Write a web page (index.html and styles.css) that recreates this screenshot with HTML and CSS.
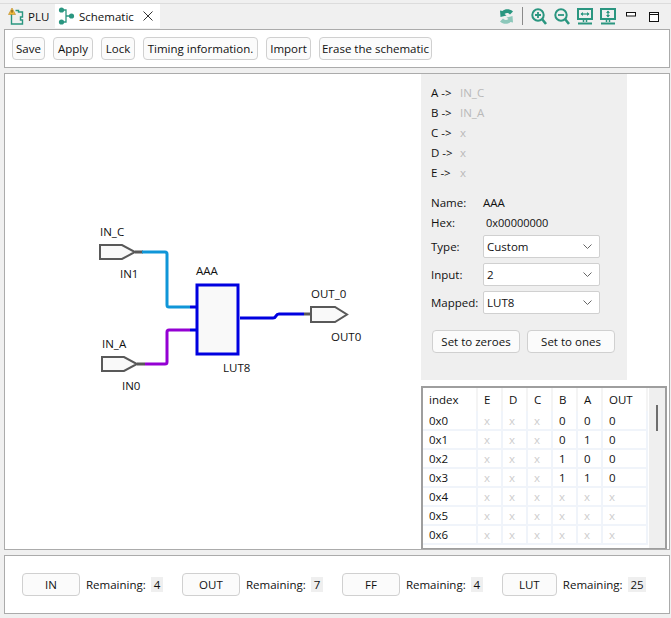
FILE: index.html
```html
<!DOCTYPE html>
<html lang="en">
<head>
    <meta charset="UTF-8">
    <title>Schematic</title>
    <link rel="stylesheet" href="styles.css">
</head>
<body>
    <div class="tabbar">
        <div class="tab">
            <svg class="tab-icon" width="16" height="18" viewBox="0 0 16 18">
                <path d="M3.500 7v10h11v-4h-2v-3h2V5h-4V3.500h-3" fill="none" stroke="#2a9680" stroke-width="1.400"/>
                <path d="M4 1 7.500 7.500H.5z" fill="#f0b93a" stroke="#b98a2a" stroke-width=".6"/>
                <rect x="3.500" y="3" width="1" height="2.600" fill="#5a4010"/>
            </svg>
            <span>PLU</span>
        </div>
        <div class="tab active">
            <svg class="tab-icon" width="17" height="18" viewBox="0 0 17 18">
                <path d="M3 3h5v12H3M8 9h6" fill="none" stroke="#2a9680" stroke-width="1.300"/>
                <circle cx="3.500" cy="3" r="2.600" fill="#2a9680"/>
                <circle cx="3.500" cy="15" r="2.600" fill="#2a9680"/>
                <circle cx="13.500" cy="9" r="2.600" fill="#2a9680"/>
            </svg>
            <span>Schematic</span>
            <svg class="tab-close" width="10" height="10" viewBox="0 0 10 10">
                <path d="M.5.500l9 9M9.500.500l-9 9" stroke="#333" stroke-width="1" fill="none"/>
            </svg>
        </div>
        <div class="view-tools">
            <svg class="tool" width="15" height="17" viewBox="0 0 15 17">
                <path d="M14 3.500C11 .5 6 .5 3.500 3L1 2.500 1.500 9l6-1.500-2-1.500C7.500 4.500 10 5 11 6.500z" fill="#2a9680"/>
                <path d="M1 13.500c3 3 8 3 10.500.5l2.500.500L13.500 8l-6 1.500 2 1.500c-2 1.500-4.500 1-5.500-.500z" fill="#8cc7ba"/>
            </svg>
            <span class="tool-sep"></span>
            <svg class="tool" width="16" height="17" viewBox="0 0 16 17">
                <circle cx="7" cy="7" r="5.700" fill="none" stroke="#2a9680" stroke-width="2"/>
                <path d="M11 11l4 5" stroke="#2a9680" stroke-width="2.600"/>
                <path d="M4 7h6M7 4v6" stroke="#2a9680" stroke-width="1.800"/>
            </svg>
            <svg class="tool" width="16" height="17" viewBox="0 0 16 17">
                <circle cx="7" cy="7" r="5.700" fill="none" stroke="#2a9680" stroke-width="2"/>
                <path d="M11 11l4 5" stroke="#2a9680" stroke-width="2.600"/>
                <path d="M4 7h6" stroke="#2a9680" stroke-width="1.800"/>
            </svg>
            <svg class="tool" width="16" height="17" viewBox="0 0 16 17">
                <rect x="1" y="1" width="14" height="10" fill="none" stroke="#2a9680" stroke-width="2"/>
                <path d="M6.500 11v3M9.500 11v3" stroke="#2a9680" stroke-width="1.500"/>
                <path d="M1 15.500h14" stroke="#2a9680" stroke-width="2"/>
                <path d="M4 6h8" stroke="#2a9680" stroke-width="1.200"/>
                <path d="M3.500 6 6 4v4zM12.500 6 10 4v4z" fill="#2a9680"/>
            </svg>
            <svg class="tool" width="16" height="17" viewBox="0 0 16 17">
                <rect x="1" y="1" width="14" height="10" fill="none" stroke="#2a9680" stroke-width="2"/>
                <path d="M6.500 11v3M9.500 11v3" stroke="#2a9680" stroke-width="1.500"/>
                <path d="M1 15.500h14" stroke="#2a9680" stroke-width="2"/>
                <path d="M8 3v6" stroke="#2a9680" stroke-width="1.200"/>
                <path d="M8 2.500 10 5H6zM8 9.500 10 7H6z" fill="#2a9680"/>
            </svg>
            <svg class="win-min" width="10" height="5" viewBox="0 0 10 5">
                <rect x=".5" y=".5" width="9" height="3.500" fill="#fff" stroke="#111"/>
            </svg>
            <svg class="win-max" width="10" height="10" viewBox="0 0 10 10">
                <rect x=".5" y=".5" width="9" height="9" fill="#fff" stroke="#111"/>
                <path d="M0 2.500h10" stroke="#111"/>
            </svg>
        </div>
    </div>

    <div class="panel toolbar">
        <button class="btn save-btn">Save</button>
        <button class="btn apply-btn">Apply</button>
        <button class="btn lock-btn">Lock</button>
        <button class="btn timing-btn">Timing information.</button>
        <button class="btn import-btn">Import</button>
        <button class="btn erase-btn">Erase the schematic</button>
    </div>

    <div class="panel workspace">
        <svg class="diagram" width="416" height="474" viewBox="5 74 416 474">
            <path d="M135 252h8M137 364h8" stroke="#595959" stroke-width="3" fill="none"/>
            <path d="M142 252h23q2 0 2 2v51q0 2 2 2h21" stroke="#0f96d8" stroke-width="3" fill="none"/>
            <path d="M145 364h20q2 0 2-2v-30q0-2 2-2h21" stroke="#9400d3" stroke-width="3" fill="none"/>
            <path d="M190 307h6M190 330h6M240 318h33q2 0 3-2t3-2h25" stroke="#0000e0" stroke-width="3" fill="none"/>
            <path d="M304 314h7" stroke="#595959" stroke-width="3" fill="none"/>
            <polygon class="port" points="100,245 122,245 135,252 122,259 100,259"/>
            <polygon class="port" points="102,357 124,357 137,364 124,371 102,371"/>
            <polygon class="port" points="311,307 335,307 347,314.500 335,322 311,322"/>
            <rect x="197" y="285" width="41" height="69" fill="#f9f9f9" stroke="#0000e0" stroke-width="3"/>
            <text class="net" x="100" y="236">IN_C</text>
            <text class="net" x="120" y="278">IN1</text>
            <text class="net" x="196" y="275">AAA</text>
            <text class="net" x="311" y="298">OUT_0</text>
            <text class="net" x="331" y="341">OUT0</text>
            <text class="net" x="102" y="348">IN_A</text>
            <text class="net" x="122" y="390">IN0</text>
            <text class="net" x="223" y="372">LUT8</text>
        </svg>

        <div class="side">
            <div class="props">
                <div class="pin"><span class="pin-name">A -&gt;</span><span class="muted">IN_C</span></div>
                <div class="pin"><span class="pin-name">B -&gt;</span><span class="muted">IN_A</span></div>
                <div class="pin"><span class="pin-name">C -&gt;</span><span class="muted">x</span></div>
                <div class="pin"><span class="pin-name">D -&gt;</span><span class="muted">x</span></div>
                <div class="pin"><span class="pin-name">E -&gt;</span><span class="muted">x</span></div>

                <div class="info first"><span class="info-label">Name:</span><span>AAA</span></div>
                <div class="info"><span class="info-label">Hex:</span><span class="hex">0x00000000</span></div>

                <div class="field first"><span>Type:</span>
                    <div class="combo">Custom<svg width="9" height="5" viewBox="0 0 9 5"><path d="M.5.500l4 4 4-4" fill="none" stroke="#666"/></svg></div>
                </div>
                <div class="field"><span>Input:</span>
                    <div class="combo">2<svg width="9" height="5" viewBox="0 0 9 5"><path d="M.5.500l4 4 4-4" fill="none" stroke="#666"/></svg></div>
                </div>
                <div class="field"><span>Mapped:</span>
                    <div class="combo">LUT8<svg width="9" height="5" viewBox="0 0 9 5"><path d="M.5.500l4 4 4-4" fill="none" stroke="#666"/></svg></div>
                </div>

                <div class="set-row">
                    <button class="btn set-btn">Set to zeroes</button>
                    <button class="btn set-btn">Set to ones</button>
                </div>
            </div>

            <div class="truth">
                <table>
                    <thead>
                        <tr><th class="c-index">index</th><th>E</th><th>D</th><th>C</th><th>B</th><th>A</th><th class="c-out">OUT</th></tr>
                    </thead>
                    <tbody>
                        <tr><td>0x0</td><td class="faint">x</td><td class="faint">x</td><td class="faint">x</td><td>0</td><td>0</td><td>0</td></tr>
                        <tr><td>0x1</td><td class="faint">x</td><td class="faint">x</td><td class="faint">x</td><td>0</td><td>1</td><td>0</td></tr>
                        <tr><td>0x2</td><td class="faint">x</td><td class="faint">x</td><td class="faint">x</td><td>1</td><td>0</td><td>0</td></tr>
                        <tr><td>0x3</td><td class="faint">x</td><td class="faint">x</td><td class="faint">x</td><td>1</td><td>1</td><td>0</td></tr>
                        <tr><td>0x4</td><td class="faint">x</td><td class="faint">x</td><td class="faint">x</td><td class="faint">x</td><td class="faint">x</td><td class="faint">x</td></tr>
                        <tr><td>0x5</td><td class="faint">x</td><td class="faint">x</td><td class="faint">x</td><td class="faint">x</td><td class="faint">x</td><td class="faint">x</td></tr>
                        <tr><td>0x6</td><td class="faint">x</td><td class="faint">x</td><td class="faint">x</td><td class="faint">x</td><td class="faint">x</td><td class="faint">x</td></tr>
                    </tbody>
                </table>
                <div class="scroll"><div class="scroll-thumb"></div></div>
            </div>
        </div>
    </div>

    <div class="panel resources">
        <div class="res"><button class="btn res-btn">IN</button><span class="res-label">Remaining:</span><span class="count">4</span></div>
        <div class="res"><button class="btn res-btn">OUT</button><span class="res-label">Remaining:</span><span class="count">7</span></div>
        <div class="res"><button class="btn res-btn">FF</button><span class="res-label">Remaining:</span><span class="count">4</span></div>
        <div class="res"><button class="btn res-btn res-lut">LUT</button><span class="res-label">Remaining:</span><span class="count">25</span></div>
    </div>
</body>
</html>
```

FILE: styles.css
```css
html, body {
    height: 100%;
}

body {
    margin: 0;
    background: #f0f0f0;
    color: #111;
    font-family: "Open Sans", "Noto Sans", sans-serif;
    font-size: 11.5px;
    overflow: hidden;
    padding-top: 3px;
    box-sizing: border-box;
}

.tabbar {
    display: flex;
    height: 25px;
    border-top: 1px solid #dcdcdc;
    padding-left: 7px;
    box-sizing: border-box;
}

.tab {
    display: flex;
    align-items: center;
    gap: 4px;
    width: 47px;
    box-sizing: border-box;
    padding-left: 1px;
    white-space: nowrap;
}

.tab.active {
    width: 105px;
    margin-left: 1px;
    padding: 0 7px 0 3px;
    background: #fff;
}

.tab-close {
    margin-left: auto;
}

.view-tools {
    display: flex;
    align-items: center;
    margin-left: auto;
    padding-right: 12px;
}

.tool {
    margin-right: 7px;
}

.tool-sep {
    width: 1px;
    height: 18px;
    background: #8a8a8a;
    margin: 0 8px 0 1px;
}

.win-min {
    margin: -4px 13px 0 3px;
}

.win-max {
    margin-top: 1px;
}

.panel {
    background: #fff;
    border: 1px solid #ababab;
    margin-left: 4px;
    margin-right: 1px;
    box-sizing: border-box;
}

.toolbar {
    display: flex;
    gap: 8px;
    height: 39px;
    margin-top: 1px;
    padding: 7px;
}

.btn {
    height: 23px;
    padding: 0;
    border: 1px solid #d0d0d0;
    border-radius: 4px;
    background: #fbfbfb;
    color: #111;
    font: inherit;
    white-space: nowrap;
}

.save-btn { width: 33px; }
.apply-btn { width: 40px; }
.lock-btn { width: 34px; }
.timing-btn { width: 115px; }
.import-btn { width: 45px; }
.erase-btn { width: 113px; }

.workspace {
    display: flex;
    height: 477px;
    margin-top: 5px;
}

.diagram {
    flex: none;
    display: block;
}

.net {
    font-size: 11.5px;
    fill: #111;
}

.port {
    fill: #f9f9f9;
    stroke: #595959;
    stroke-width: 2;
}

.side {
    display: flex;
    flex-direction: column;
    width: 246px;
}

.props {
    width: 206px;
    height: 306px;
    background: #efefef;
    box-sizing: border-box;
    padding: 8px 10px 0;
}

.pin {
    display: flex;
    height: 20px;
    align-items: center;
}

.pin-name {
    width: 29px;
}

.muted {
    color: #b9b9b9;
}

.faint {
    color: #cdcdcd;
}

.info {
    display: flex;
    height: 20px;
    align-items: center;
}

.info.first {
    margin-top: 10px;
}

.info-label {
    width: 52px;
}

.hex {
    margin-left: 3px;
    font-size: 11px;
}

.field {
    display: flex;
    align-items: center;
    justify-content: space-between;
    height: 23px;
    margin-top: 5px;
    padding-right: 17px;
}

.field.first {
    margin-top: 3px;
}

.combo {
    display: flex;
    align-items: center;
    justify-content: space-between;
    width: 117px;
    height: 23px;
    box-sizing: border-box;
    padding: 0 3px;
    background: #fff;
    border: 1px solid #d0d0d0;
    border-radius: 2px;
}

.combo svg {
    margin-right: 4px;
}

.set-row {
    display: flex;
    gap: 7px;
    margin: 16px 0 0 1px;
}

.set-btn {
    width: 88px;
}

.truth {
    display: flex;
    flex: 1;
    margin-top: 6px;
    border: 2px solid #9e9e9e;
    border-bottom-width: 1px;
    box-sizing: border-box;
    overflow: hidden;
}

.truth table {
    flex: none;
    align-self: flex-start;
    width: 224px;
    border-collapse: collapse;
    table-layout: fixed;
}

.truth th, .truth td {
    box-sizing: border-box;
    padding: 0 0 0 6px;
}

.truth th {
    width: 25px;
    height: 23px;
    font-weight: normal;
    text-align: left;
    border-right: 2px solid #f4f4f4;
}

.truth th.c-index {
    width: 54px;
}

.truth th.c-out {
    width: 45px;
}

.truth td {
    height: 19px;
    border-right: 2px solid #f0f4fa;
    border-bottom: 2px solid #f0f4fa;
}

.scroll {
    position: relative;
    flex: 1;
    background: #efefef;
    margin-left: 1px;
}

.scroll-thumb {
    position: absolute;
    left: 7px;
    top: 17px;
    width: 2px;
    height: 26px;
    background: #6e6e6e;
}

.resources {
    display: flex;
    align-items: center;
    gap: 19px;
    height: 59px;
    margin-top: 5px;
    padding-left: 17px;
}

.res {
    display: flex;
    align-items: center;
    gap: 6px;
}

.res-btn {
    width: 58px;
}

.res-lut {
    width: 55px;
}

.res-label {
    width: 59px;
}

.count {
    background: #efefef;
    padding: 0 2.7px;
    line-height: 15px;
}
```
